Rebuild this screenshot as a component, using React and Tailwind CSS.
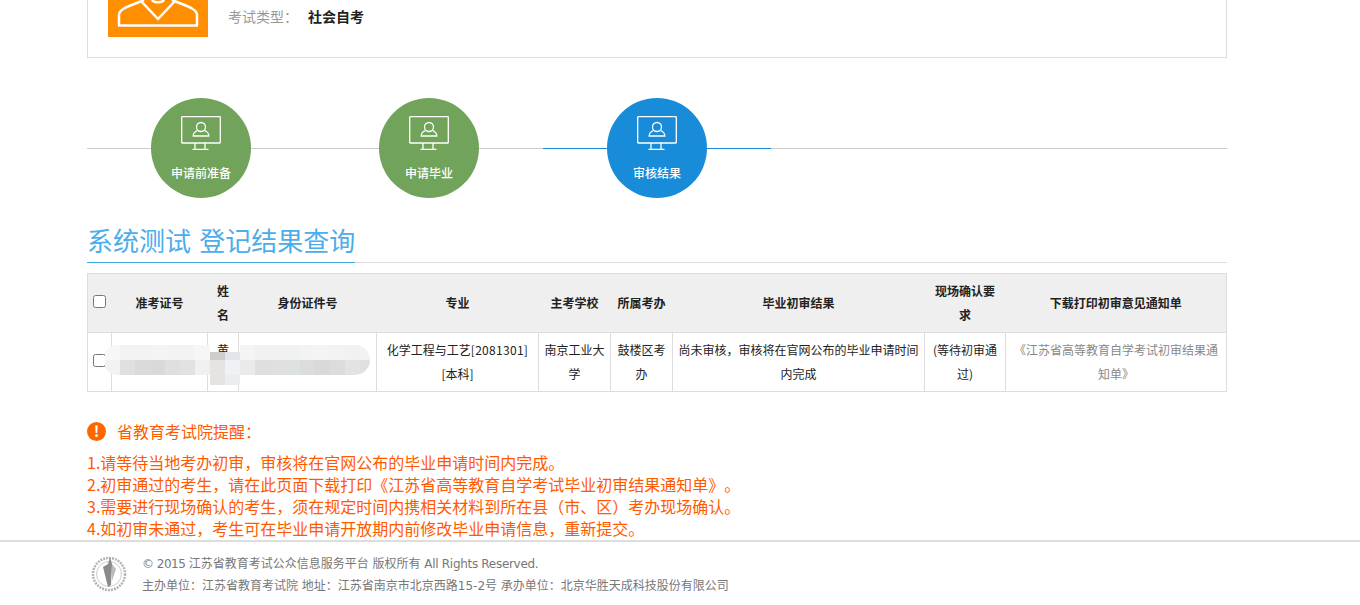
const cjk = { fontFamily: '"Noto Sans CJK SC", "Liberation Sans", sans-serif' }
const latinWide = { fontFamily: '"DejaVu Sans", "Noto Sans CJK SC", sans-serif' }

const steps = [
  { label: '申请前准备', color: 'bg-[#72a35b]' },
  { label: '申请毕业', color: 'bg-[#72a35b]' },
  { label: '审核结果', color: 'bg-[#188cd9]', active: true },
]

const notices = [
  '1.请等待当地考办初审，审核将在官网公布的毕业申请时间内完成。',
  '2.初审通过的考生，请在此页面下载打印《江苏省高等教育自学考试毕业初审结果通知单》。',
  '3.需要进行现场确认的考生，须在规定时间内携相关材料到所在县（市、区）考办现场确认。',
  '4.如初审未通过，考生可在毕业申请开放期内前修改毕业申请信息，重新提交。',
]

const mosaicLeft = [
  ['bg-[#f7f7f7]', 'bg-[#f2f2f2]'],
  ['bg-[#f2f3f3]', 'bg-[#dfe1e1]'],
  ['bg-[#f3f3f3]', 'bg-[#dadada]'],
  ['bg-[#f4f4f4]', 'bg-[#d8d9da]'],
  ['bg-[#f3f3f3]', 'bg-[#dfdfdf]'],
  ['bg-[#f3f3f3]', 'bg-[#e2e2e2]'],
  ['bg-[#f6f6f6]', 'bg-[#f0f0f0]'],
]

const mosaicRight = [
  ['bg-[#f4f4f4]', 'bg-[#ece9ea]'],
  ['bg-[#f0f1f1]', 'bg-[#dfdfe0]'],
  ['bg-[#f0f1f1]', 'bg-[#e0e0e0]'],
  ['bg-[#f0f2f2]', 'bg-[#dee1e2]'],
  ['bg-[#f3f3f3]', 'bg-[#dbdcdd]'],
  ['bg-[#f3f4f4]', 'bg-[#d9d8da]'],
  ['bg-[#f3f3f3]', 'bg-[#dcdcdc]'],
  ['bg-[#f1f1f2]', 'bg-[#e3e3e3]'],
  ['bg-[#f2f2f2]', 'bg-[#e0dfe2]'],
]

function MosaicTiles({ tiles, className }) {
  return (
    <div className={`absolute top-[72px] flex h-[30px] overflow-hidden ${className}`}>
      {tiles.map(([top, bottom], i) => (
        <div key={i} className="w-[15px] shrink-0">
          <div className={`h-[15px] ${top}`}></div>
          <div className={`h-[15px] ${bottom}`}></div>
        </div>
      ))}
    </div>
  )
}

function MonitorIcon() {
  return (
    <svg width="40" height="34" viewBox="0 0 40 34" fill="none" stroke="white" strokeWidth="1.3">
      <rect x="0.7" y="0.7" width="38.600" height="26.300" rx="0.5" />
      <path d="M14 27v6M24 27v6M11.500 33.300h16" />
      <circle cx="20" cy="11" r="4.500" />
      <path d="M16.500 14.500c-2.500 1-4.300 2.800-4.300 5.500h15.600c0-2.700-1.800-4.500-4.300-5.500" />
    </svg>
  )
}

function Step({ label, color, active }) {
  return (
    <div className="relative flex w-[228px] justify-center">
      {active && <div className="absolute left-0 right-0 top-[50px] h-px bg-[#188cd9]"></div>}
      <div className={`relative flex h-[100px] w-[100px] flex-col items-center rounded-full pt-[18px] ${color}`}>
        <MonitorIcon />
        <span className="mt-[14px] text-xs leading-[18px] font-medium text-white">{label}</span>
      </div>
    </div>
  )
}

export default function App() {
  return (
    <div className="h-[605px] overflow-hidden bg-white [text-spacing-trim:space-all]" style={cjk}>
      <div className="mx-[87px] w-[1140px]">
        <div className="flex h-[58px] items-start gap-[20px] border-x border-b border-[#dddddd] pl-5">
          <div className="h-[37px] w-[100px] overflow-hidden bg-[#ff8f00]">
            <svg width="100" height="37" viewBox="0 0 100 37" fill="none" stroke="white" strokeWidth="2.5">
              <path d="M11 25.500V15C11 8 25 5 36 0M89 25.500V15C89 8 75 5 64 0M10 25.500H90M32 0l18 19L68 0M44 0c2 3 10 3 12 0" />
            </svg>
          </div>
          <div className="flex h-[32px] items-center text-sm">
            <span className="w-[80px] text-[#999999]">考试类型：</span>
            <span className="font-bold text-[#222222]">社会自考</span>
          </div>
        </div>

        <div className="relative mt-[40px] flex h-[100px]">
          <div className="absolute left-0 right-0 top-[50px] h-px bg-[#cccccc]"></div>
          {steps.map((s) => (
            <Step key={s.label} {...s} />
          ))}
        </div>

        <div className="mt-[23px] border-b border-[#dddddd]">
          <h2 className="-mb-px w-fit border-b border-[#3fa9e8] pt-[3px] pb-[1px] text-[26px] leading-[37px] font-normal text-[#4badea]" style={latinWide}>
            系统测试 登记结果查询
          </h2>
        </div>

        <div className="relative mt-[10px]">
          <table className="w-[1139px] table-fixed border-collapse border border-[#dddddd] text-center text-xs leading-[24px] text-[#222222]">
            <colgroup>
              <col className="w-[24px]" />
              <col className="w-[96px]" />
              <col className="w-[31px]" />
              <col className="w-[138px]" />
              <col className="w-[162px]" />
              <col className="w-[72px]" />
              <col className="w-[62px]" />
              <col className="w-[252px]" />
              <col className="w-[81px]" />
              <col className="w-[221px]" />
            </colgroup>
            <thead>
              <tr className="h-[59px] bg-[#efefef] font-bold">
                <th className="p-0"><input type="checkbox" className="-mt-[3px] block h-[13px] w-[13px] translate-x-[5px]" /></th>
                <th className="p-0">准考证号</th>
                <th className="px-[5px] py-0">姓名</th>
                <th className="p-0">身份证件号</th>
                <th className="p-0">专业</th>
                <th className="p-0">主考学校</th>
                <th className="p-0">所属考办</th>
                <th className="p-0">毕业初审结果</th>
                <th className="px-[5px] py-0">现场确认要求</th>
                <th className="p-0">下载打印初审意见通知单</th>
              </tr>
            </thead>
            <tbody>
              <tr className="h-[59px]">
                <td className="border border-[#dddddd] p-0"><input type="checkbox" className="-mt-[4px] block h-[13px] w-[13px] translate-x-[5px]" /></td>
                <td className="border border-[#dddddd] p-0"></td>
                <td className="border border-[#dddddd] px-1 pt-[5px] pb-0 align-top">黄</td>
                <td className="border border-[#dddddd] p-0"></td>
                <td className="border border-[#dddddd] px-1 py-0">化学工程与工艺<span className="tracking-[0.3px]">[2081301]</span><br />[本科]</td>
                <td className="border border-[#dddddd] px-1 py-0">南京工业大学</td>
                <td className="border border-[#dddddd] px-1 py-0">鼓楼区考办</td>
                <td className="border border-[#dddddd] px-1 py-0">尚未审核，审核将在官网公布的毕业申请时间内完成</td>
                <td className="border border-[#dddddd] px-1 py-0">(等待初审通过)</td>
                <td className="border border-[#dddddd] px-1 py-0 text-[#888888]">《江苏省高等教育自学考试初审结果通知单》</td>
              </tr>
            </tbody>
          </table>
          {/* mosaic over the personal data */}
          <MosaicTiles tiles={mosaicLeft} className="left-[16px] w-[107px] justify-end rounded-l-[15px]" />
          <MosaicTiles tiles={mosaicRight} className="left-[153px] w-[130px] rounded-r-[15px]" />
          <div className="absolute left-[123px] top-[79px] flex">
            <div className="w-[15px]">
              <div className="h-[8px] bg-[#cfcccb]"></div>
              <div className="h-[25px] bg-[#e6e4e3]"></div>
            </div>
            <div className="w-[15px]">
              <div className="h-[8px] bg-[#e2e5e9]"></div>
              <div className="h-[15px] bg-[#eff1f4]"></div>
              <div className="h-[10px] bg-[#ecedf0]"></div>
            </div>
          </div>
        </div>

        <div className="mt-[27px] flex items-center text-base leading-[24px] text-[#ff5a00]">
          <span className="flex h-[19px] w-[19px] items-center justify-center rounded-full bg-[#ff6600] text-[15px] font-bold text-white">!</span>
          <span className="ml-[11px]">省教育考试院提醒：</span>
        </div>
        <div className="mt-[8px] text-base leading-[22px] whitespace-nowrap text-[#ff5a00]">
          {notices.map((n) => (
            <p key={n}>{n}</p>
          ))}
        </div>
      </div>

      <div className="relative mt-px h-[70px] border-t-2 border-[#dddddd] bg-white pl-[91px]" style={latinWide}>
        <div className="flex items-start">
          <svg width="36" height="36" viewBox="0 0 36 36" className="mt-[14px]" fill="none">
            <circle cx="18" cy="18" r="16" stroke="#b5b5b5" strokeWidth="2.500" strokeDasharray="2 1" />
            <circle cx="18" cy="18" r="12.500" stroke="#cccccc" strokeWidth="1" />
            <path d="M19 1l2 7-1 21-3 2-5-20 5-3z" fill="#8a8a8a" />
            <path d="M21 8l4 5-4 12z" fill="#bbbbbb" />
          </svg>
          <div className="ml-[15px] text-xs leading-[22px] text-[#777777]">
            <p className="mt-[11px]">
              <span className="tracking-[-0.5px]">© 2015 </span>江苏省教育考试公众信息服务平台 版权所有 <span className="tracking-[-0.3px]">All Rights Reserved.</span>
            </p>
            <p>主办单位：江苏省教育考试院 地址：江苏省南京市北京西路15-2号 承办单位：北京华胜天成科技股份有限公司</p>
          </div>
        </div>
      </div>
    </div>
  )
}
